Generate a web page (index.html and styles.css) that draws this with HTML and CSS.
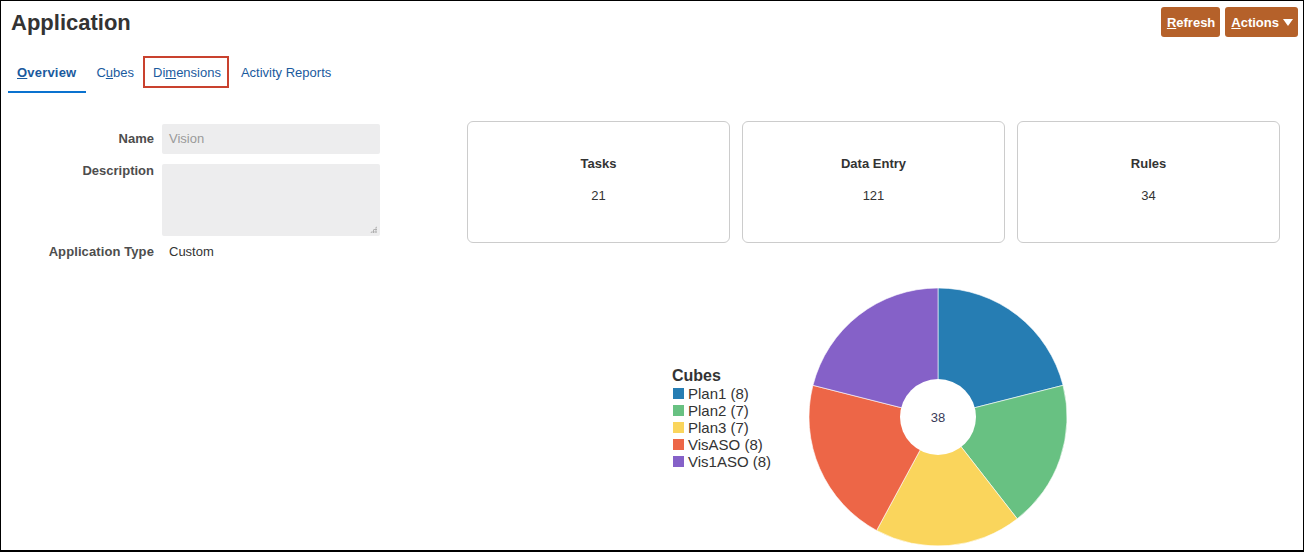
FILE: index.html
```html
<!DOCTYPE html>
<html>
<head>
<meta charset="utf-8">
<link rel="stylesheet" href="styles.css">
</head>
<body>
<div class="frame">
  <header class="header">
    <h1 class="title">Application</h1>
    <div class="actions">
      <button class="btn"><u>R</u>efresh</button>
      <button class="btn"><u>A</u>ctions <span class="caret"></span></button>
    </div>
  </header>
  <nav class="tabs">
    <div class="tab active"><span class="tab-label"><u>O</u>verview</span></div>
    <div class="tab"><span class="tab-label">C<u>u</u>bes</span></div>
    <div class="tab focus"><span class="tab-label">Di<u>m</u>ensions</span></div>
    <div class="tab"><span class="tab-label">Activity Reports</span></div>
  </nav>
  <main class="content">
    <section class="form">
      <div class="label">Name</div>
      <div class="field input">Vision</div>
      <div class="label label-top">Description</div>
      <div class="field textarea"><span class="grip"></span></div>
      <div class="label label-type">Application Type</div>
      <div class="value-type">Custom</div>
    </section>
    <section class="dash">
      <div class="cards">
        <div class="card"><div class="card-title">Tasks</div><div class="card-value">21</div></div>
        <div class="card"><div class="card-title">Data Entry</div><div class="card-value">121</div></div>
        <div class="card"><div class="card-title">Rules</div><div class="card-value">34</div></div>
      </div>
      <div class="chart">
        <div class="legend">
          <div class="legend-title">Cubes</div>
          <div class="legend-item"><span class="sw sw-blue"></span>Plan1 (8)</div>
          <div class="legend-item"><span class="sw sw-green"></span>Plan2 (7)</div>
          <div class="legend-item"><span class="sw sw-yellow"></span>Plan3 (7)</div>
          <div class="legend-item"><span class="sw sw-red"></span>VisASO (8)</div>
          <div class="legend-item"><span class="sw sw-purple"></span>Vis1ASO (8)</div>
        </div>
        <svg class="pie" width="260" height="260" viewBox="0 0 260 260">
          <path d="M130 130 L130 1 A129 129 0 0 1 255.05 98.33 Z" fill="#267db3" stroke="#fff" stroke-width="0.6"/>
          <path d="M130 130 L255.05 98.33 A129 129 0 0 1 209.22 231.81 Z" fill="#68c182" stroke="#fff" stroke-width="0.6"/>
          <path d="M130 130 L209.22 231.81 A129 129 0 0 1 68.61 243.45 Z" fill="#fad55c" stroke="#fff" stroke-width="0.6"/>
          <path d="M130 130 L68.61 243.45 A129 129 0 0 1 4.95 98.33 Z" fill="#ed6647" stroke="#fff" stroke-width="0.6"/>
          <path d="M130 130 L4.95 98.33 A129 129 0 0 1 130 1 Z" fill="#8561c8" stroke="#fff" stroke-width="0.6"/>
          <circle cx="130" cy="130" r="38" fill="#fff"/>
          <text x="130" y="134.5" text-anchor="middle" class="pie-center">38</text>
        </svg>
      </div>
    </section>
  </main>
</div>
</body>
</html>
```
FILE: styles.css
```css
* { box-sizing: border-box; }
html, body { margin: 0; padding: 0; background: #fff; }
body { font-family: "Liberation Sans", Arial, sans-serif; color: #333; }

.frame {
  width: 1304px;
  height: 552px;
  border: 1px solid #000;
  border-bottom-width: 2px;
  padding: 0 5px 0 7px;
  overflow: hidden;
  background: #fff;
}

.header {
  display: flex;
  justify-content: space-between;
  align-items: flex-start;
  padding-top: 6px;
  height: 55px;
}
.title {
  margin: 3px 0 0 3px;
  font-size: 22px;
  line-height: 26px;
  font-weight: bold;
  color: #333;
}
.actions { display: flex; gap: 5px; }
.btn {
  height: 30px;
  padding: 0 5px 0 6px;
  border: none;
  border-radius: 3px;
  background: #b5612a;
  color: #fff;
  font-family: "Liberation Sans", Arial, sans-serif;
  font-size: 13px;
  font-weight: bold;
  display: flex;
  align-items: center;
}
.caret {
  display: inline-block;
  width: 0; height: 0;
  margin-left: 4px;
  border-left: 5.5px solid transparent;
  border-right: 5.5px solid transparent;
  border-top: 7px solid #fff;
}

.tabs { display: flex; height: 37px; }
.tab {
  display: flex;
  flex-direction: column;
  border-bottom: 2px solid transparent;
  height: 37px;
  font-size: 13px;
  color: #1a5a9e;
}
.tab-label {
  height: 32px;
  line-height: 34px;
  padding: 0 9px 0 10px;
}
.tab.active { border-bottom-color: #0a72cf; }
.tab.active .tab-label { font-weight: bold; padding: 0 10px 0 9px; letter-spacing: 0.2px; }
.tab.focus .tab-label {
  border: 2px solid #c9412e;
  line-height: 30px;
  padding: 0 6px 0 8px;
}
.tab.focus + .tab .tab-label { padding-left: 12px; }

.content {
  display: flex;
  padding-top: 28px;
}
.form {
  display: grid;
  grid-template-columns: 146px 218px;
  column-gap: 8px;
  align-content: start;
  margin-top: 3px;
  width: 372px;
  font-size: 13px;
}
.label {
  text-align: right;
  font-weight: bold;
  color: #4d4d4d;
  line-height: 30px;
}
.label-top { line-height: 15px; margin-top: 9px; }
.field {
  background: #ededee;
  border-radius: 2px;
  color: #9a9a9a;
}
.input { height: 30px; line-height: 30px; padding: 0 7px; }
.textarea { height: 72px; margin-top: 10px; position: relative; }
.grip {
  position: absolute;
  right: 3px; bottom: 3px;
  width: 7px; height: 7px;
  background:
    radial-gradient(circle, #aaa 0.8px, transparent 1px) 0 0 / 2.4px 2.4px;
  clip-path: polygon(100% 0, 100% 100%, 0 100%);
}
.label-type { line-height: 20px; margin-top: 6px; letter-spacing: 0.1px; }
.value-type { line-height: 20px; margin-top: 6px; color: #333; padding-left: 7px; }

.dash {
  margin-left: 87px;
  width: 813px;
}
.cards { display: flex; gap: 12px; }
.card {
  flex: 1;
  height: 122px;
  border: 1px solid #cccccc;
  border-radius: 6px;
  text-align: center;
  padding-top: 34px;
  font-size: 13px;
}
.card-title { font-weight: bold; line-height: 16px; color: #333; }
.card-value { line-height: 16px; margin-top: 16px; color: #333; }

.chart {
  display: flex;
  align-items: center;
  margin-top: 44px;
  padding-left: 205px;
}
.legend {
  width: 136px;
  margin-top: 3px;
}
.legend-title {
  font-size: 16px;
  font-weight: bold;
  line-height: 18px;
  color: #333;
}
.legend-item {
  display: flex;
  align-items: center;
  font-size: 15px;
  line-height: 17px;
  color: #333;
}
.sw {
  width: 11px; height: 11px;
  margin: 0 4px 0 1px;
}
.sw-blue { background: #267db3; }
.sw-green { background: #68c182; }
.sw-yellow { background: #fad55c; }
.sw-red { background: #ed6647; }
.sw-purple { background: #8561c8; }
.pie { display: block; flex: none; }
.pie-center {
  font-family: "Liberation Sans", Arial, sans-serif;
  font-size: 13px;
  fill: #3a3a58;
}
```
